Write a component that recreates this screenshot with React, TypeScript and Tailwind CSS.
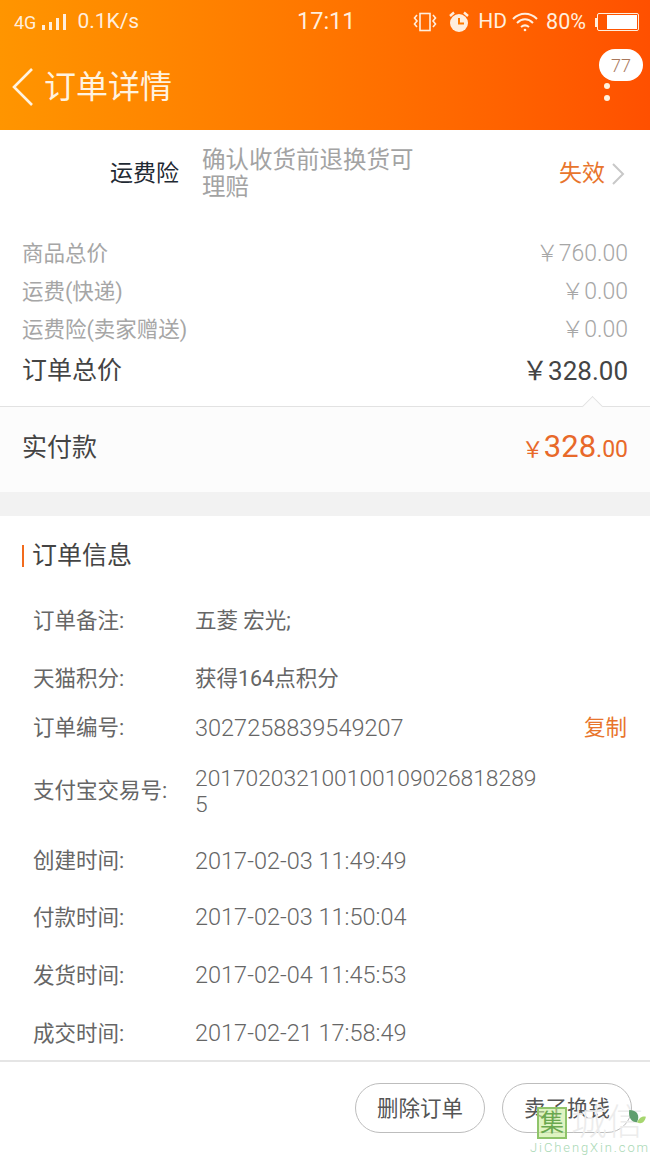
const font = 'font-["Roboto","Noto_Sans_CJK_SC",sans-serif]'

const prices = [
  { label: '商品总价', value: '￥760.00' },
  { label: '运费(快递)', value: '￥0.00' },
  { label: '运费险(卖家赠送)', value: '￥0.00' },
]

const infoRows = [
  { label: '订单备注:', value: '五菱 宏光;', h: 'h-[58px]', cjk: true },
  { label: '天猫积分:', value: '获得164点积分', h: 'h-[58px]', cjk: true },
  { label: '订单编号:', value: '3027258839549207', h: 'h-[41px]', action: '复制' },
  { label: '支付宝交易号:', value: '2017020321001001090268182895', h: 'h-[85px]', wrap: true },
  { label: '创建时间:', value: '2017-02-03 11:49:49', h: 'h-[55px]' },
  { label: '付款时间:', value: '2017-02-03 11:50:04', h: 'h-[58px]' },
  { label: '发货时间:', value: '2017-02-04 11:45:53', h: 'h-[58px]' },
  { label: '成交时间:', value: '2017-02-21 17:58:49', h: 'h-[58px]' },
]

function StatusBar() {
  return (
    <div className="flex h-[44px] items-center pl-[14px] pr-[11px] text-[#ffeedd]">
      <div className="flex w-[283px] items-center">
        <span className="text-[18px]">4G</span>
        <svg width="26" height="18" viewBox="0 0 26 18" className="ml-[5px]" fill="currentColor">
          <rect x="1" y="12" width="3" height="5" />
          <rect x="8" y="9" width="3" height="8" />
          <rect x="15" y="5" width="3" height="12" />
          <rect x="22" y="1" width="3" height="16" />
        </svg>
        <span className="ml-[10px] text-[21px]">0.1K/s</span>
      </div>
      <span className="text-[23.500px]">17:11</span>
      <div className="flex flex-1 items-center justify-end">
        <svg width="24" height="20" viewBox="0 0 24 20" fill="none" stroke="currentColor" strokeWidth="1.6">
          <rect x="7" y="1.5" width="10" height="17" />
          <path d="M4 3 L1.5 6 L4 9 L1.5 12 L4 15" />
          <path d="M20 3 L22.5 6 L20 9 L22.5 12 L20 15" />
        </svg>
        <svg width="22" height="22" viewBox="0 0 22 22" className="ml-[11px]">
          <circle cx="11" cy="12" r="9" fill="currentColor" />
          <path d="M11 7 V12.5 H16" fill="none" stroke="#ff7a00" strokeWidth="2" />
          <path d="M2 5 L6 1.5 M20 5 L16 1.5" stroke="currentColor" strokeWidth="2.4" />
        </svg>
        <span className="ml-[8px] text-[21px]">HD</span>
        <svg width="26" height="20" viewBox="0 0 26 20" className="ml-[5px]" fill="none" stroke="currentColor" strokeWidth="2">
          <path d="M1 7 C8 0 18 0 25 7" />
          <path d="M5 11 C10 6 16 6 21 11" />
          <path d="M9 15 C11.500 13 14.500 13 17 15" />
          <circle cx="13" cy="18" r="1.300" fill="currentColor" stroke="none" />
        </svg>
        <span className="ml-[8px] text-[21.500px]">80%</span>
        <span className="ml-[9px] h-[9px] w-[2px] bg-[#ffeedd]" />
        <span className="flex h-[18px] w-[42px] items-center justify-end rounded-[2px] border border-[#ffeedd] p-[1px]">
          <span className="h-full w-[30px] bg-white" />
        </span>
      </div>
    </div>
  )
}

function Header() {
  return (
    <header className="relative h-[130px] bg-gradient-to-r from-[#ff9500] to-[#ff5000]">
      <StatusBar />
      <div className="flex h-[86px] items-center text-[#fff3e0]">
        <svg width="24" height="40" viewBox="0 0 24 40" fill="none" stroke="currentColor" strokeWidth="2.6" className="ml-[11px] mr-[9px]">
          <path d="M21 2 L3 20 L21 38" />
        </svg>
        <h1 className="text-[32px] leading-none">订单详情</h1>
      </div>
      {/* 77 message bubble over the overflow dots */}
      <div className="absolute right-[7px] top-[49px] flex h-[32px] w-[44px] items-center justify-center rounded-full bg-white text-[18px] font-light text-[#a9785c]">
        77
      </div>
      <div className="absolute right-[40px] top-[83px] flex flex-col gap-[6px]">
        <span className="h-[6px] w-[6px] rounded-full bg-[#fff3e0]" />
        <span className="h-[6px] w-[6px] rounded-full bg-[#fff3e0]" />
      </div>
    </header>
  )
}

function Watermark() {
  return (
    <div className="pointer-events-none absolute bottom-0 right-0 h-[50px] w-[120px]">
      <div className="relative flex h-[36px] items-center">
        <span className="ml-[7px] flex h-[32px] w-[30px] items-center justify-center border-2 border-[#8fc46a] bg-[#c9ec9a]/60 text-[24px] leading-none text-[#6aa84f]">
          集
        </span>
        <span className="ml-[4px] text-[36px] leading-none font-light whitespace-nowrap text-[#ececec]">城信</span>
        <svg width="20" height="22" viewBox="0 0 18 18" className="absolute right-[3px] top-[3px]">
          <path d="M2 1 C9 1 12 6 9 12 C4 12 1 8 2 1 Z" fill="#5f9e6e" />
          <path d="M9 12 C11 7 15 6 17 7 C16 12 13 14 9 12 Z" fill="#a6d66f" />
        </svg>
      </div>
      <div className="text-[13px] leading-[14px] font-light tracking-[1.900px] whitespace-nowrap text-[#a9d8b4]">JiChengXin.com</div>
    </div>
  )
}

export default function App() {
  return (
    <div className={`${font} relative h-[1155px] w-[650px] overflow-hidden bg-white`}>
      <Header />

      <div className="flex h-[105px] pt-[17px]">
        <span className="ml-[110px] mt-[12px] h-fit text-[23px] leading-[30px] text-[#1f2a33]">运费险</span>
        <p className="ml-[23px] w-[216px] text-[23.5px] leading-[27px] text-[#a3a3a3]">确认收货前退换货可理赔</p>
        <span className="ml-[141px] mt-[12px] h-fit text-[23px] leading-[30px] whitespace-nowrap text-[#e8752c]">失效</span>
        <svg width="14" height="24" viewBox="0 0 14 24" fill="none" stroke="#c8c8c8" strokeWidth="2" className="ml-[6px] mt-[15px]">
          <path d="M2 2 L12 12 L2 22" />
        </svg>
      </div>

      <div className="px-[22px]">
        {prices.map((row) => (
          <div key={row.label} className="flex h-[38px] items-center justify-between text-[#a6a6a6]">
            <span className="text-[21.5px]">{row.label}</span>
            <span className="text-[23px] font-light">{row.value}</span>
          </div>
        ))}
        <div className="flex h-[57px] items-start justify-between pt-[3px] text-[#444444]">
          <span className="text-[25px]">订单总价</span>
          <span className="text-[26px]">￥328.00</span>
        </div>
      </div>

      <div className="relative h-[86px] border-t border-[#e2e2e2] bg-[#fcfcfc]">
        {/* little notch pointing at the total */}
        <span className="absolute right-[50px] top-[-8px] h-[15px] w-[15px] rotate-45 border-l border-t border-[#e2e2e2] bg-[#fcfcfc]" />
        <div className="flex h-full items-center justify-between px-[22px] pb-[4px]">
          <span className="text-[25px] text-[#444444]">实付款</span>
          <span className="flex items-baseline text-[#e8692a]">
            <span className="text-[22px]">￥</span>
            <span className="text-[31px]">328</span>
            <span className="text-[23px]">.00</span>
          </span>
        </div>
      </div>

      <div className="h-[24px] bg-[#f2f2f2]" />

      <section className="h-[546px] border-b-2 border-[#e5e5e5]">
        <div className="flex h-[76px] items-center pl-[22px] pt-[4px]">
          <span className="h-[22px] w-[2px] bg-[#f26b1d]" />
          <h2 className="ml-[8px] text-[25px] text-[#444444]">订单信息</h2>
        </div>
        <div className="px-[33px]">
          {infoRows.map((row) => (
            <div key={row.label} className={`flex ${row.h} items-center text-[21.5px] text-[#666666]`}>
              <span className="w-[162px] shrink-0 whitespace-nowrap">{row.label}</span>
              <span className={row.cjk ? '' : row.wrap ? 'w-[350px] text-[22.8px] leading-[26px] font-light break-all' : 'text-[23.5px] font-light'}>{row.value}</span>
              {row.action && <span className="ml-auto mr-[-10px] text-[#e8752c]">{row.action}</span>}
            </div>
          ))}
        </div>
      </section>

      <div className="flex justify-end gap-[17px] pr-[18px] pt-[21px]">
        <button type="button" className="h-[50px] w-[130px] rounded-full border border-[#bdbdbd] pt-[3px] text-[21.5px] text-[#555555]">删除订单</button>
        <button type="button" className="h-[50px] w-[130px] rounded-full border border-[#bdbdbd] pt-[3px] text-[21.5px] text-[#555555]">卖了换钱</button>
      </div>

      <Watermark />
    </div>
  )
}
